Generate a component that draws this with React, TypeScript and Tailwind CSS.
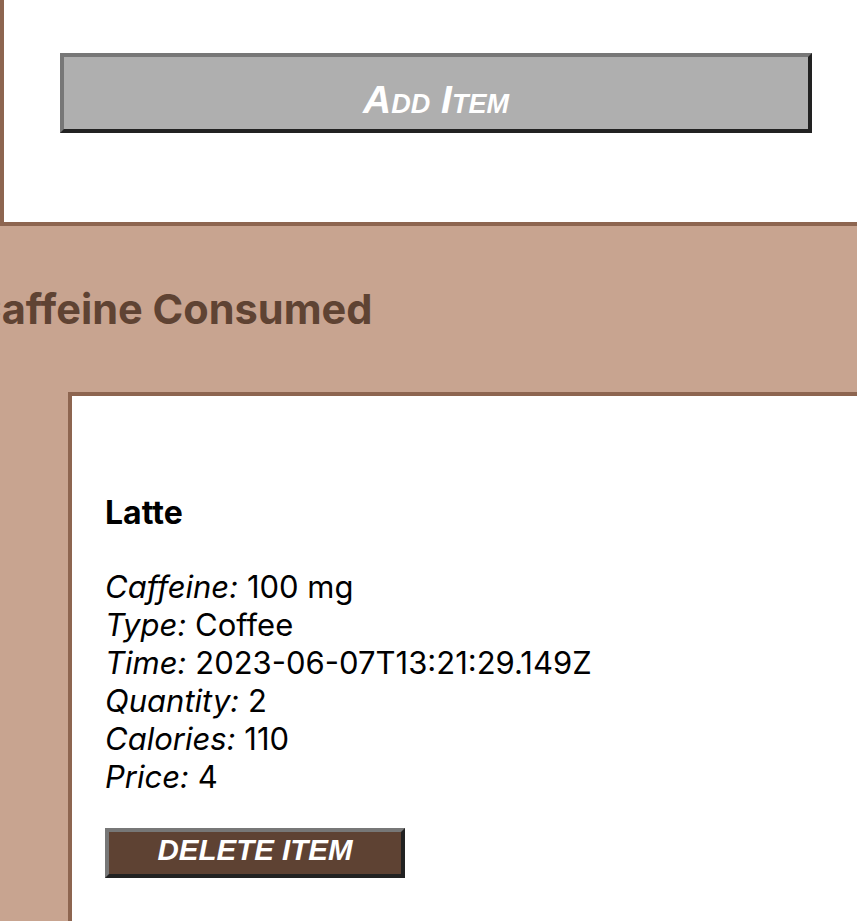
import React from "react";

const fields: [string, string][] = [
  ["Caffeine", "100 mg"],
  ["Type", "Coffee"],
  ["Time", "2023-06-07T13:21:29.149Z"],
  ["Quantity", "2"],
  ["Calories", "110"],
  ["Price", "4"],
];

export default function App() {
  return (
    <div className="w-full min-h-[921px] overflow-hidden bg-[#c8a490]">
      {/* top form area */}
      <div className="bg-white border-l-4 border-b-4 border-solid border-[#8d6550] h-[226px] pt-[53px] pl-[56px]">
        <button
          type="button"
          className="w-[752px] h-[80px] bg-[#afafaf] border-4 border-solid border-t-[#777777] border-l-[#777777] border-b-[#222222] border-r-[#222222] flex items-center justify-center text-white font-bold italic"
          style={{ fontFamily: '"Liberation Sans", Arial, sans-serif' }}
        >
          <span className="inline-block text-[39px] leading-none [font-variant:small-caps] translate-y-[6px]">
            Add Item
          </span>
        </button>
      </div>

      {/* consumed section */}
      <div className="pt-[63px]" style={{ fontFamily: "Inter, sans-serif" }}>
        <h2 className="-ml-[29px] text-[41.5px] leading-none h-[42px] font-bold text-[#5f4333] whitespace-nowrap">
          Caffeine Consumed
        </h2>
        <div className="mt-[61px] ml-[68px] bg-white border-l-4 border-t-4 border-solid border-[#8d6550] pt-[101px] pl-[33px] pb-[60px] text-black">
          <div className="text-[32px] leading-none font-bold">Latte</div>
          <div className="mt-[39px] text-[31px] leading-[38px]">
            {fields.map(([k, v]) => (
              <div key={k}>
                <em className="italic">{k}:</em> {v}
              </div>
            ))}
          </div>
          <button
            type="button"
            className="mt-[32px] w-[300px] h-[50px] bg-[#5e4233] border-4 border-solid border-t-[#777777] border-l-[#777777] border-b-[#222222] border-r-[#222222] flex items-center justify-center text-white font-bold italic"
            style={{ fontFamily: '"Liberation Sans", Arial, sans-serif' }}
          >
            <span className="inline-block text-[29.5px] leading-none -translate-y-[3px]">
              DELETE ITEM
            </span>
          </button>
        </div>
      </div>
    </div>
  );
}
